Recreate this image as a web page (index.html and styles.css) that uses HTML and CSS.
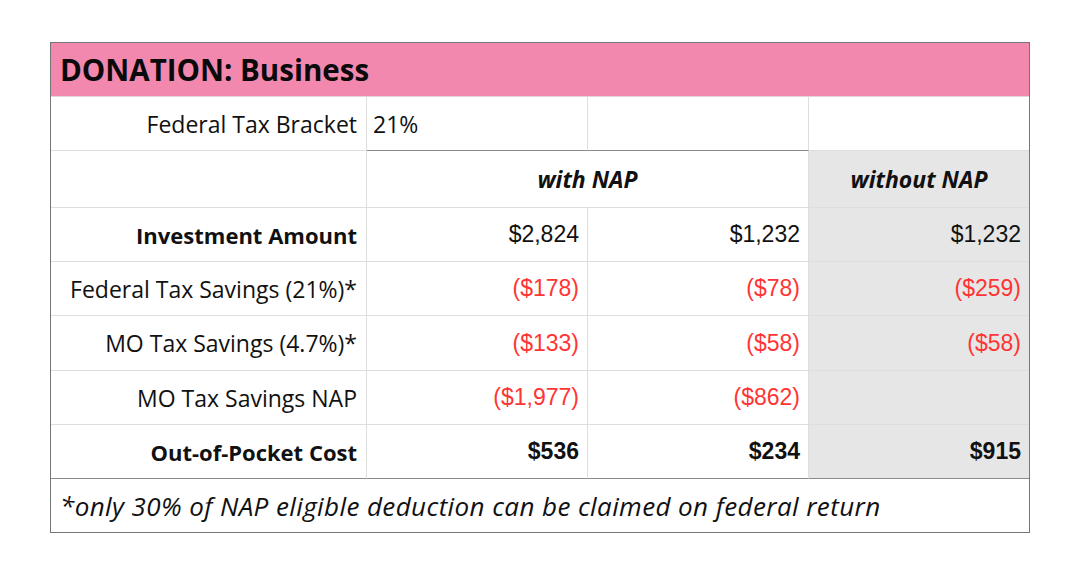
FILE: index.html
```html
<!DOCTYPE html>
<html lang="en">
<head>
<meta charset="utf-8">
<title>DONATION: Business</title>
<link rel="stylesheet" href="styles.css">
</head>
<body>
<div class="page">
  <div class="sheet">
    <div class="title">DONATION: Business</div>

    <div class="cell label">Federal Tax Bracket</div>
    <div class="cell value-left">21%</div>
    <div class="cell dark-bottom"></div>
    <div class="cell last"></div>

    <div class="cell"></div>
    <div class="cell head span2">with NAP</div>
    <div class="cell head gray last">without NAP</div>

    <div class="cell label bold">Investment Amount</div>
    <div class="cell num">$2,824</div>
    <div class="cell num">$1,232</div>
    <div class="cell num gray last">$1,232</div>

    <div class="cell label">Federal Tax Savings (21%)*</div>
    <div class="cell num neg">($178)</div>
    <div class="cell num neg">($78)</div>
    <div class="cell num neg gray last">($259)</div>

    <div class="cell label">MO Tax Savings (4.7%)*</div>
    <div class="cell num neg">($133)</div>
    <div class="cell num neg">($58)</div>
    <div class="cell num neg gray last">($58)</div>

    <div class="cell label">MO Tax Savings NAP</div>
    <div class="cell num neg">($1,977)</div>
    <div class="cell num neg">($862)</div>
    <div class="cell num gray last"></div>

    <div class="cell label bold total">Out-of-Pocket Cost</div>
    <div class="cell num bold total">$536</div>
    <div class="cell num bold total">$234</div>
    <div class="cell num bold gray total last">$915</div>

    <div class="footnote">*only 30% of NAP eligible deduction can be claimed on federal return</div>
  </div>
</div>
</body>
</html>
```

FILE: styles.css
```css
* { box-sizing: border-box; }

html, body {
  margin: 0;
  padding: 0;
  background: #ffffff;
}

.page {
  padding: 42px 0 0 50px;
}

.sheet {
  width: 980px;
  border: 1px solid #767676;
  display: grid;
  grid-template-columns: 316px 221px 221px 220px;
  grid-template-rows: 54px 54px 57px 54px 54px 55px 54px 54px 53px;
  font-family: "Open Sans", "Liberation Sans", sans-serif;
  color: #111111;
}

.title {
  grid-column: 1 / 5;
  background: #f388af;
  border-bottom: 1px solid #e2d6da;
  display: flex;
  align-items: center;
  padding-left: 9px;
  font-size: 29.5px;
  font-weight: 700;
  color: #0a0a0a;
}

.cell {
  border-right: 1px solid #dedede;
  border-bottom: 1px solid #dedede;
  display: flex;
  align-items: center;
  font-size: 23px;
}

.cell.last { border-right: none; }

.label {
  justify-content: flex-end;
  padding-right: 9px;
}

.label.bold { font-size: 22px; }

.value-left {
  padding-left: 6px;
  border-bottom-color: #8a8a8a;
}

.dark-bottom { border-bottom-color: #8a8a8a; }

.head {
  justify-content: center;
  font-weight: 700;
  font-style: italic;
  font-size: 23px;
}

.span2 { grid-column: 2 / 4; }

.gray { background: #e6e6e6; }

.num {
  justify-content: flex-end;
  padding-right: 8px;
  font-family: "Liberation Sans", Arial, sans-serif;
  font-size: 23px;
}

.neg { color: #ff3434; }

.bold { font-weight: 700; }

.total { border-bottom-color: #8a8a8a; }

.footnote {
  grid-column: 1 / 5;
  display: flex;
  align-items: center;
  padding-left: 9px;
  font-size: 26px;
  letter-spacing: 0.4px;
  font-style: italic;
  color: #111111;
}
```
